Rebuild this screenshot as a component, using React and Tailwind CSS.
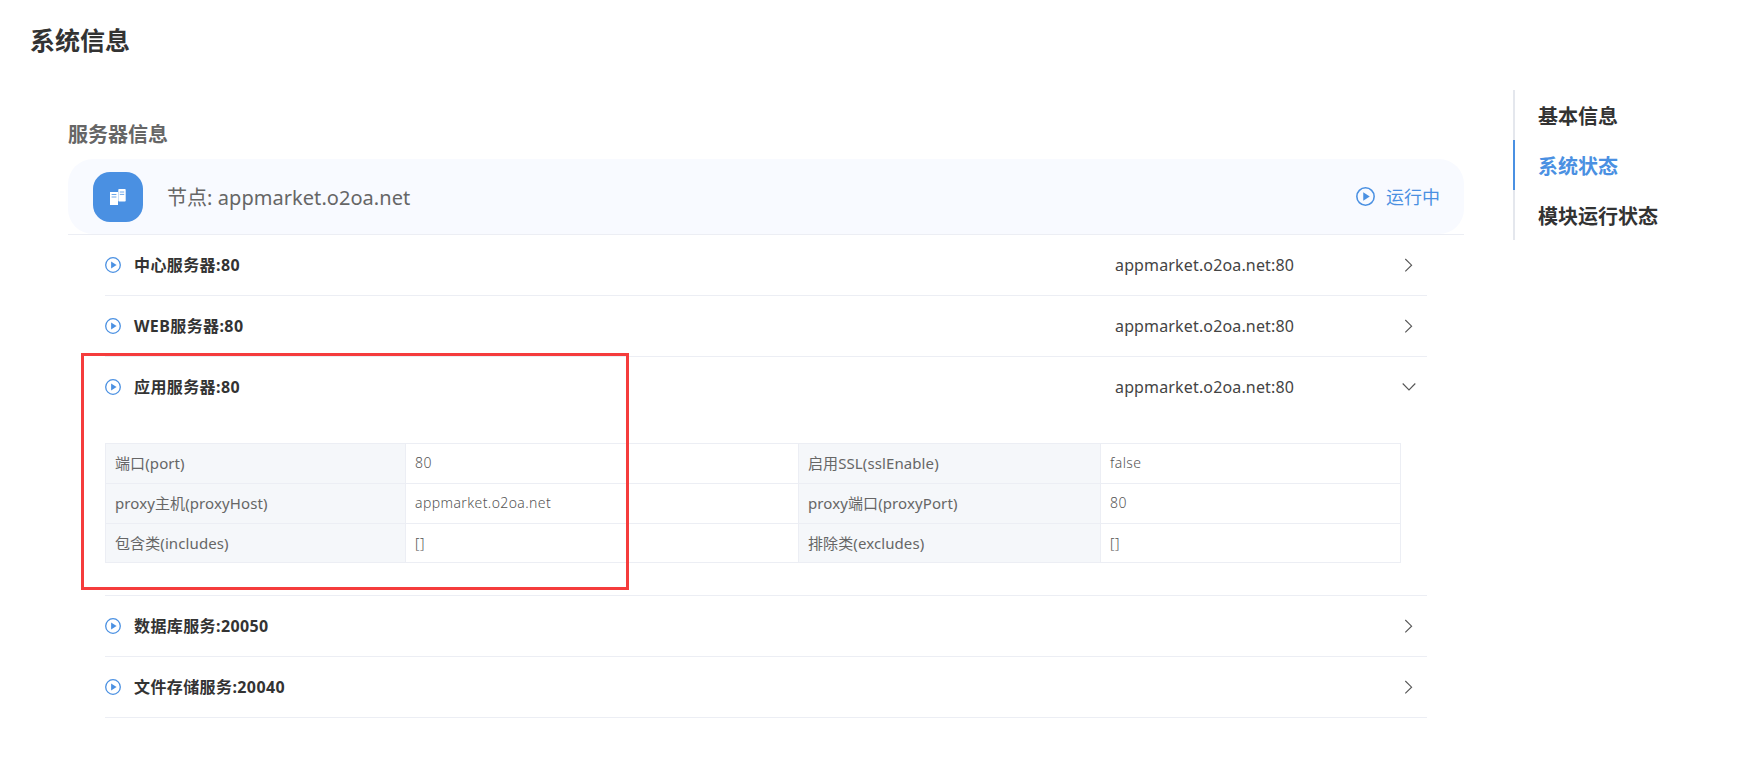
const FONT = "font-['Noto_Sans','Noto_Sans_CJK_SC',sans-serif]";

function Play({ size = 16 }) {
  return (
    <svg width={size} height={size} viewBox="0 0 16 16" fill="none" className="shrink-0">
      <circle cx="8" cy="8" r="7.3" stroke="#4a90e2" strokeWidth="1.3" />
      <path d="M6.1 4.4 L11.6 8 L6.1 11.6 Z" fill="#4a90e2" />
    </svg>
  );
}

function Chevron({ open }) {
  return (
    <svg width="14" height="14" viewBox="0 0 14 14" fill="none" className="shrink-0">
      {open ? (
        <path d="M0.7 3.5 L7 9.9 L13.3 3.5" stroke="#555" strokeWidth="1.1" />
      ) : (
        <path d="M3.3 1 L9.6 7.2 L3.3 13.4" stroke="#555" strokeWidth="1.1" />
      )}
    </svg>
  );
}

function ServerIcon() {
  return (
    <svg width="16" height="16" viewBox="0 0 16 16" fill="none">
      <rect x="0" y="3" width="8" height="13" fill="#fff" />
      <rect x="8.3" y="0" width="7.4" height="12.6" rx="0.8" fill="#fff" />
      <path d="M1.6 5.5h4.8M1.6 8h4.8" stroke="#6ea8ea" strokeWidth="1" />
      <path d="M9.8 3h4.4M9.8 5.4h4.4" stroke="#6ea8ea" strokeWidth="1" />
    </svg>
  );
}

function Row({ title, addr, open, noBorder }) {
  return (
    <div className={`flex items-center ${noBorder ? "h-[60px]" : "h-[61px] border-b border-[#eceef4]"}`}>
      <Play />
      <div className="ml-[13px] w-[981px] text-[16px] font-bold tracking-[0.4px] text-[#333]">{title}</div>
      <div className="w-[287px] text-[16px] tracking-[0.15px] text-[#444]">{addr}</div>
      <Chevron open={open} />
    </div>
  );
}

function Cell({ children, label, raise }) {
  return (
    <div
      className={`flex h-full items-center border-r border-[#eceef4] pl-[9px] ${
        label
          ? "bg-[#f5f7fa] text-[15px] tracking-[0.1px] text-[#666]"
          : `bg-white text-[14px] font-light tracking-[0.4px] text-[#555] ${raise ? "pb-[3px]" : ""}`
      }`}
    >
      {children}
    </div>
  );
}

function TableRow({ cells, raise }) {
  return (
    <div className="grid h-[40px] grid-cols-[300px_393px_302px_300px] border-b border-[#eceef4] last:h-[39px]">
      <Cell label>{cells[0]}</Cell>
      <Cell raise={raise}>{cells[1]}</Cell>
      <Cell label>{cells[2]}</Cell>
      <Cell raise={raise}>{cells[3]}</Cell>
    </div>
  );
}

export default function App() {
  return (
    <div className={`relative h-[780px] w-full overflow-hidden bg-white ${FONT}`}>
      <div className="flex h-[80px] items-center pl-[30px] pt-[2px] text-[25px] font-bold text-[#333]">系统信息</div>
      <div className="flex">
        <div className="ml-[68px] w-[1396px] pt-[29px]">
          <div className="flex h-[50px] items-center pt-[2px] text-[20px] font-bold text-[#666]">服务器信息</div>
          <div className="border-b border-[#eceef4]">
            <div className="flex h-[75px] items-center rounded-[25px] bg-[#f8faff] pl-[25px] pr-[24px]">
              <div className="flex h-[50px] w-[50px] items-center justify-center rounded-[17px] bg-[#4a90e2]">
                <ServerIcon />
              </div>
              <div className="ml-[24px] flex-1 pt-[2px] text-[20px] tracking-[0.05px] text-[#666]">节点: appmarket.o2oa.net</div>
              <Play size={19} />
              <div className="ml-[11px] pt-[2px] text-[18px] text-[#4a90e2]">运行中</div>
            </div>
          </div>
          <div className="ml-[37px] w-[1322px]">
            <Row title="中心服务器:80" addr="appmarket.o2oa.net:80" />
            <Row title="WEB服务器:80" addr="appmarket.o2oa.net:80" />
            <div className="h-[239px] border-b border-[#eceef4]">
              <Row title="应用服务器:80" addr="appmarket.o2oa.net:80" open noBorder />
              <div className="mt-[26px] w-[1296px] border-l border-t border-[#eceef4]">
                <TableRow raise cells={["端口(port)", "80", "启用SSL(sslEnable)", "false"]} />
                <TableRow raise cells={["proxy主机(proxyHost)", "appmarket.o2oa.net", "proxy端口(proxyPort)", "80"]} />
                <TableRow cells={["包含类(includes)", "[]", "排除类(excludes)", "[]"]} />
              </div>
            </div>
            <Row title="数据库服务:20050" />
            <Row title="文件存储服务:20040" />
          </div>
        </div>
        <div className="ml-[49px] mt-[10px] h-[150px] w-[200px] border-l-2 border-[#e4e7ed] text-[20px] font-bold text-[#333]">
          <div className="flex h-[50px] items-center pl-[23px] pt-[3px]">基本信息</div>
          <div className="-ml-[2px] flex h-[50px] items-center border-l-2 border-[#4a90e2] pl-[23px] pt-[3px] text-[#4a90e2]">系统状态</div>
          <div className="flex h-[50px] items-center pl-[23px] pt-[3px]">模块运行状态</div>
        </div>
      </div>
      <div className="absolute left-[81px] top-[353px] h-[237px] w-[548px] border-[3px] border-[#f53c3c]" />
    </div>
  );
}
